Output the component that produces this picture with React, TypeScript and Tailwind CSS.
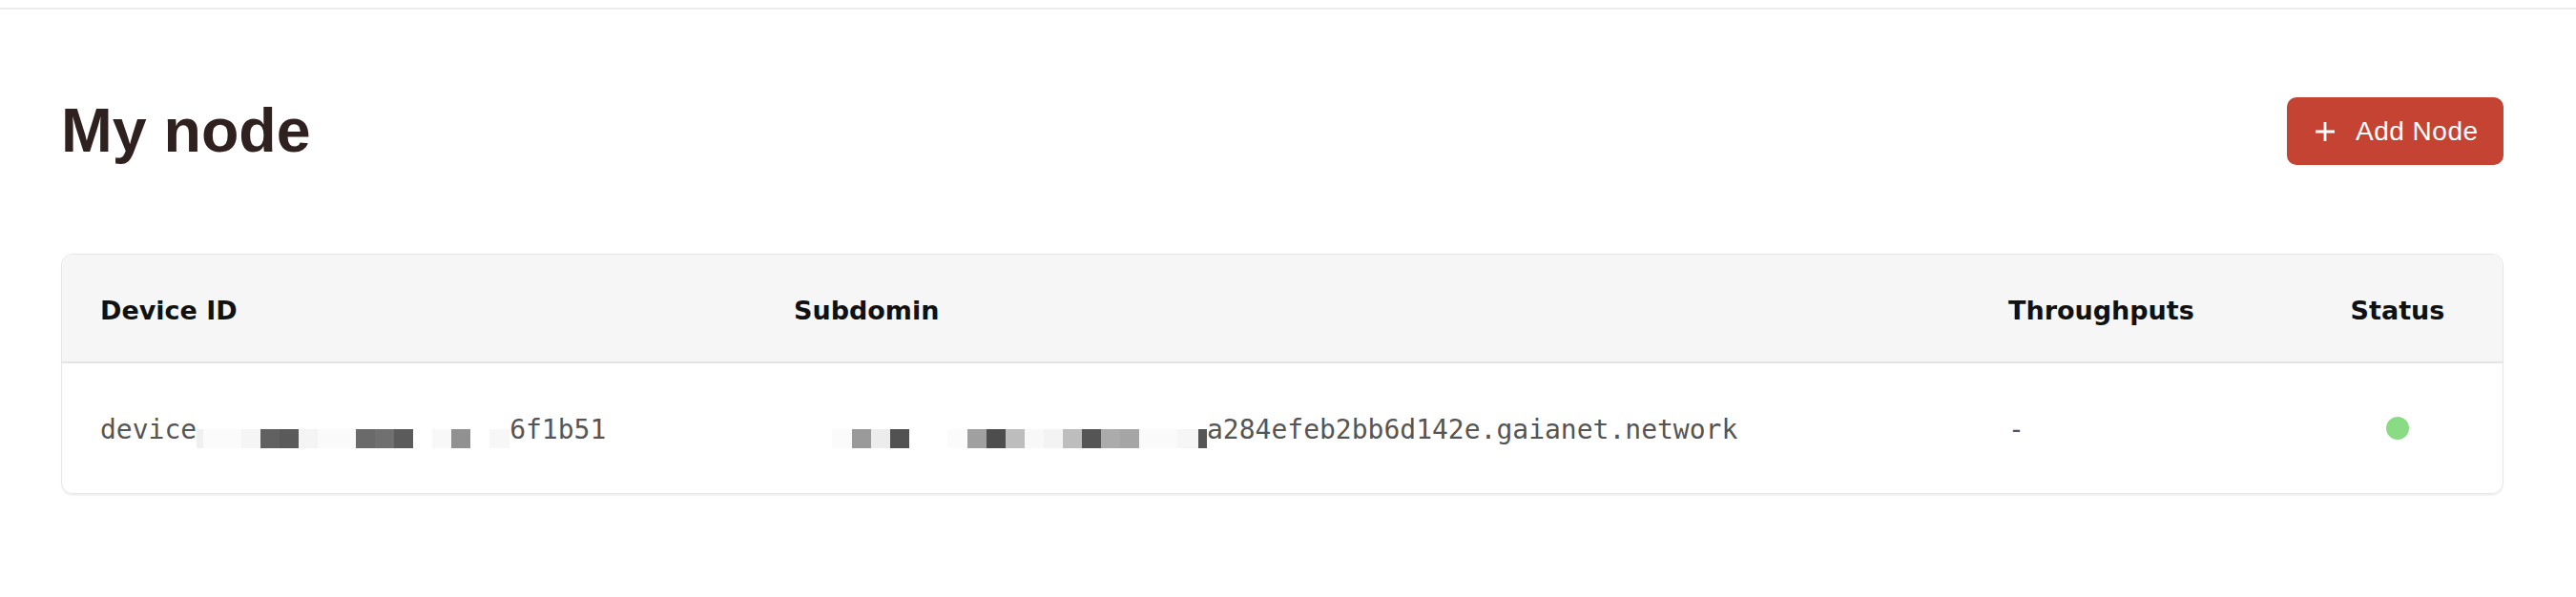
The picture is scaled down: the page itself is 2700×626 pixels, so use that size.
import React from "react";

type Cell = [number, string];

// redacted (pixelated) part of the ids, as [width, colour] pairs
const deviceMask: Cell[] = [
  [7, "#f0f0f0"],
  [40, "#fbfbfb"],
  [20, "#f5f5f5"],
  [20, "#616161"],
  [20, "#5a5a5a"],
  [20, "#f4f4f4"],
  [40, "#fafafa"],
  [20, "#6a6a6a"],
  [20, "#707070"],
  [20, "#5b5b5b"],
  [20, "#ffffff"],
  [20, "#f8f8f8"],
  [20, "#919191"],
  [20, "#ffffff"],
  [21, "#f7f7f7"],
];

const subMask: Cell[] = [
  [40, "#ffffff"],
  [21, "#fbfbfb"],
  [20, "#9a9a9a"],
  [20, "#ececec"],
  [20, "#525252"],
  [40, "#ffffff"],
  [21, "#fbfbfb"],
  [20, "#a0a0a0"],
  [20, "#4d4d4d"],
  [20, "#bdbdbd"],
  [20, "#f8f8f8"],
  [20, "#f3f3f3"],
  [20, "#bdbdbd"],
  [20, "#555555"],
  [20, "#ababab"],
  [20, "#a5a5a5"],
  [40, "#fafafa"],
  [22, "#f6f6f6"],
  [9, "#555555"],
];

function Mask({ cells }: { cells: Cell[] }) {
  return (
    <span className="inline-flex h-[20px] align-[-10px]">
      {cells.map(([w, c], i) => (
        <span key={i} className="h-full" style={{ width: w, background: c }} />
      ))}
    </span>
  );
}

function PlusIcon() {
  return (
    <svg width="20" height="20" viewBox="0 0 20 20" className="shrink-0">
      <path d="M1 10h18M10 1v18" stroke="white" strokeWidth="2.8" strokeLinecap="square" fill="none" />
    </svg>
  );
}

export default function App() {
  return (
    <div className="min-h-screen bg-white">
      <div className="h-[10px] border-b-2 border-[#ececec]" />

      <div className="pl-[64px] pr-[76px]">
        {/* Title row */}
        <div className="mt-[92px] flex h-[71px] items-center justify-between">
          <h1 className="font-['Liberation_Sans',Arial,sans-serif] text-[64.5px] font-bold leading-none text-[#2f211f]">
            My node
          </h1>
          <button className="flex h-[71px] w-[227px] items-center gap-[22px] rounded-[10px] bg-[#c44332] pl-[30px] font-['Liberation_Sans',Arial,sans-serif] text-[28px] leading-none tracking-[0.5px] text-white">
            <PlusIcon />
            <span>Add Node</span>
          </button>
        </div>

        {/* Nodes table */}
        <div className="mt-[93px] overflow-hidden rounded-[12px] border border-[#e6e6e6] shadow-[0_2px_1px_rgba(0,0,0,0.05)]">
          <div className="grid h-[114px] grid-cols-[727px_1273px_356px_1fr] items-center border-b-2 border-[#e3e3e3] bg-[#f6f6f6] pl-[40px] pr-[58px] pt-[4px] font-['DejaVu_Sans',sans-serif] text-[27px] font-bold leading-none text-[#111]">
            <div>Device ID</div>
            <div>Subdomin</div>
            <div>Throughputs</div>
            <div className="text-center">Status</div>
          </div>
          <div className="grid h-[136px] grid-cols-[727px_1273px_356px_1fr] items-center pl-[40px] pr-[58px] pt-[3px] font-['DejaVu_Sans_Mono',monospace] text-[28px] leading-[40px] text-[#555]">
            <div className="whitespace-nowrap">
              device
              <Mask cells={deviceMask} />
              6f1b51
            </div>
            <div className="whitespace-nowrap">
              <Mask cells={subMask} />
              a284efeb2bb6d142e.gaianet.network
            </div>
            <div>-</div>
            <div className="flex justify-center pb-[3px]">
              <span className="h-[24px] w-[24px] rounded-full bg-[#8adc84]" />
            </div>
          </div>
        </div>
      </div>
    </div>
  );
}
